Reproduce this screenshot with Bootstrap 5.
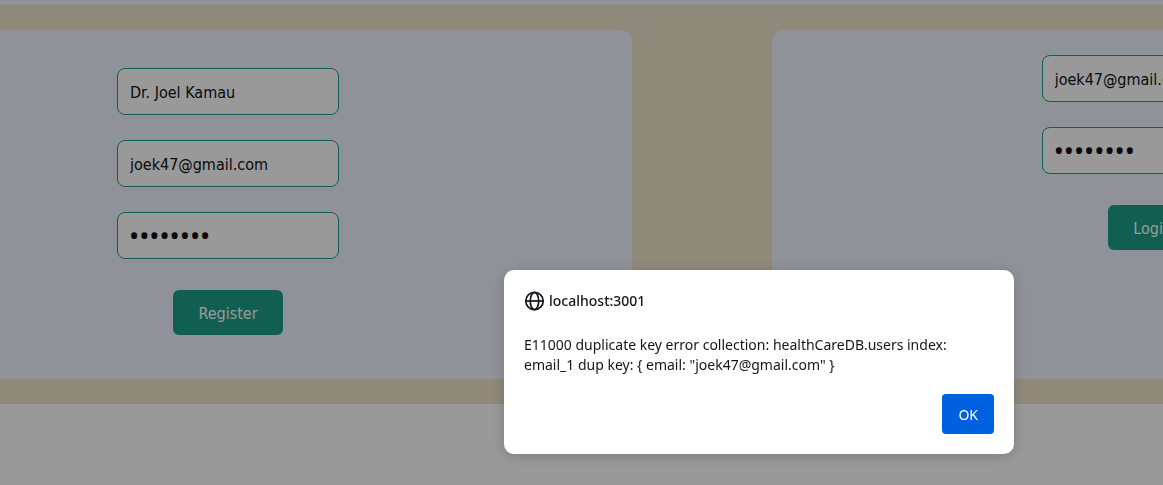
<!DOCTYPE html>
<html lang="en">
<head>
<meta charset="utf-8">
<meta name="viewport" content="width=device-width, initial-scale=1">
<title>Health Care</title>
<link href="https://cdn.jsdelivr.net/npm/bootstrap@5.3.0/dist/css/bootstrap.min.css" rel="stylesheet">
<style>
  body { background: #fff; font-family: "DejaVu Sans Condensed", "DejaVu Sans", sans-serif; font-stretch: condensed; overflow: hidden; }
  .top-strip { height: 5px; background: #f0f4ff; }
  .auth-band { background: #f1e6ce; padding: 25px 0; gap: 12%; }
  .auth-panel { background: #f0f4ff; height: 349px; }
  .register-panel { width: 54.35%; border-radius: 0 12px 12px 0; padding: 38px 0 0 117px; }
  .login-panel { border-radius: 12px 0 0 12px; padding: 25px 0 0 270px; min-width: 0; overflow: hidden; }
  .auth-form { width: 222px; gap: 25px; }
  .auth-form .form-control { height: 47px; padding: 2px 12px 0; border-color: #1b9e85; border-radius: 8px; color: #111; font-size: 16px; }
  .auth-form .form-control[type="password"] { padding: 0 11px; font-family: "Noto Sans", sans-serif; font-size: 27px; }
  .auth-form .btn { height: 45px; margin-top: 6px; padding: 2px 25px 0; border: 0; border-radius: 6px; background: #1b9e85; color: #fff; font-size: 16px; }
  .shade { background: rgba(0, 0, 0, .4); padding: 270px 0 0 355px; }
  .alert-box { width: 510px; padding: 20px; border-radius: 10px; box-shadow: 0 2px 14px rgba(0, 0, 0, .2); font-family: "Noto Sans", sans-serif; font-size: 14px; line-height: 20px; color: #15141a; }
  .alert-box h1 { font-size: 14px; line-height: 22px; gap: 4px; margin-bottom: 23px; }
  .alert-box p { margin-bottom: 19px; }
  .alert-box .btn { height: 40px; padding: 0 16px; border: 0; border-radius: 4px; background: #0061e0; font-size: 14px; }
</style>
</head>
<body>
<header class="top-strip"></header>
<main class="auth-band d-flex">
  <section class="auth-panel register-panel flex-shrink-0">
    <form class="auth-form d-flex flex-column">
      <input class="form-control" type="text" value="Dr. Joel Kamau" aria-label="Name">
      <input class="form-control" type="email" value="joek47@gmail.com" aria-label="Email">
      <input class="form-control" type="password" value="password" aria-label="Password">
      <button class="btn align-self-center" type="button">Register</button>
    </form>
  </section>
  <section class="auth-panel login-panel flex-fill">
    <form class="auth-form d-flex flex-column">
      <input class="form-control" type="email" value="joek47@gmail.com" aria-label="Email">
      <input class="form-control" type="password" value="password" aria-label="Password">
      <button class="btn align-self-center" type="button">Login</button>
    </form>
  </section>
</main>
<div class="shade position-fixed top-0 start-0 w-100 h-100 d-flex justify-content-center align-items-start">
  <div class="alert-box bg-white flex-shrink-0" role="alertdialog" aria-modal="true" aria-labelledby="origin" aria-describedby="message">
    <h1 class="d-flex align-items-center fw-medium" id="origin">
      <svg width="21" height="21" viewBox="0 0 21 21" fill="none" stroke="#15141a" stroke-width="1.7" aria-hidden="true"><circle cx="10.5" cy="10" r="8.7"/><ellipse cx="10.5" cy="10" rx="4.2" ry="8.7"/><path d="M2 10h17"/></svg>
      localhost:3001
    </h1>
    <p id="message">E11000 duplicate key error collection: healthCareDB.users index: email_1 dup key: { email: "joek47@gmail.com" }</p>
    <div class="d-flex justify-content-end"><button class="btn btn-primary" type="button">OK</button></div>
  </div>
</div>
<script src="https://cdn.jsdelivr.net/npm/bootstrap@5.3.0/dist/js/bootstrap.bundle.min.js"></script>
</body>
</html>
